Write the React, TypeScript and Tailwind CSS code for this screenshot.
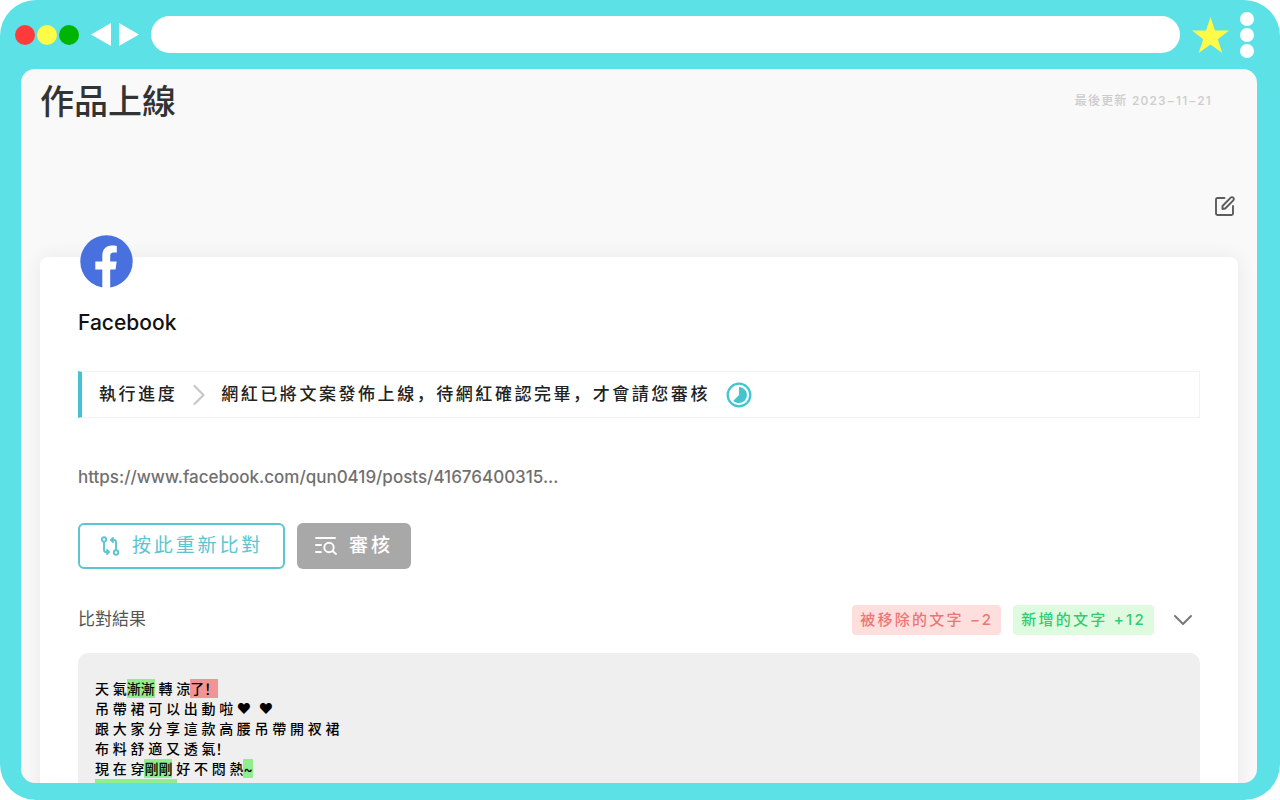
import { ChevronDown, ChevronRight } from "lucide-react";

const diffLines = [
  [
    { text: "天 氣" },
    { text: "漸漸", type: "added" },
    { text: " 轉 涼" },
    { text: "了！", type: "removed" },
  ],
  [{ text: "吊 帶 裙 可 以 出 動 啦 ♥\u00a0 ♥" }],
  [{ text: "跟 大 家 分 享 這 款 高 腰 吊 帶 開 衩 裙" }],
  [{ text: "布 料 舒 適 又 透 氣！" }],
  [
    { text: "現 在 穿" },
    { text: "剛剛", type: "added" },
    { text: " 好 不 悶 熱" },
    { text: "~", type: "added" },
  ],
];

const diffColors: Record<string, string> = {
  added: "bg-[#90ee90] py-px",
  removed: "bg-[#f29494] py-px",
};

function BrowserBar() {
  return (
    <header className="flex h-[69px] shrink-0 items-center pl-[15px] pr-[26px]">
      <div className="flex gap-0.5">
        <span className="size-5 rounded-full bg-[#ff3a3a]" />
        <span className="size-5 rounded-full bg-[#fffb47]" />
        <span className="size-5 rounded-full bg-[#00b400]" />
      </div>
      <nav className="ml-3 flex gap-2">
        <button type="button" aria-label="Back">
          <svg width="20" height="24" viewBox="0 0 20 24" fill="#fff">
            <path d="M20 0v23L0 11.5z" />
          </svg>
        </button>
        <button type="button" aria-label="Forward">
          <svg width="20" height="24" viewBox="0 0 20 24" fill="#fff">
            <path d="M0 0v23l20-11.5z" />
          </svg>
        </button>
      </nav>
      <input
        type="text"
        aria-label="Address"
        className="mx-3 h-[37px] min-w-0 flex-1 rounded-full bg-white px-5 text-sm outline-none"
      />
      <button type="button" aria-label="Bookmark">
        <svg width="38" height="36" viewBox="0 0 38 36" fill="#fffb47">
          <path d="M18.500 0l4.500 13.600H37l-11.200 8.600L30.300 36 18.500 27.500 6.700 36l4.500-13.800L0 13.600h14z" />
        </svg>
      </button>
      <button type="button" aria-label="Menu" className="ml-2.5 flex flex-col gap-0.5">
        <span className="size-3.5 rounded-full bg-white" />
        <span className="size-3.5 rounded-full bg-white" />
        <span className="size-3.5 rounded-full bg-white" />
      </button>
    </header>
  );
}

function EditIcon() {
  return (
    <svg width="22" height="22" viewBox="0 0 22 22" fill="none" stroke="#5c5c5c" strokeWidth="1.9" strokeLinecap="round" strokeLinejoin="round">
      <path d="M10.500 3H3.500a1.500 1.500 0 0 0-1.500 1.500v14a1.500 1.500 0 0 0 1.500 1.500h14a1.500 1.500 0 0 0 1.500-1.500V11" />
      <path d="M8.500 14v-3l8.200-8.300a1.800 1.800 0 0 1 2.600 0 1.800 1.800 0 0 1 0 2.600L11.200 13.500z" />
    </svg>
  );
}

function FacebookIcon() {
  return (
    <svg width="53" height="53" viewBox="0 0 53 53" className="ml-0.5">
      <circle cx="26.500" cy="26.500" r="26.200" fill="#4871df" />
      <path
        fill="#fff"
        d="M22.300 53V34.500h-7V26.500h7v-5.500c0-7 4-10.500 9.300-10.500 2 0 3.700.2 5.200.4v6.600h-2.900c-3 0-3.700 1.500-3.700 3.700v5.300h6.500l-1.200 8h-5.300V53z"
      />
    </svg>
  );
}

function ProgressIcon() {
  return (
    <svg width="26" height="26" viewBox="0 0 26 26">
      <circle cx="13" cy="13" r="11.300" fill="none" stroke="#45c4d0" strokeWidth="2.300" />
      <path d="M13 5a8 8 0 1 1-5.700 13.700L13 13z" fill="#45c4d0" />
    </svg>
  );
}

function CompareIcon() {
  return (
    <svg width="20" height="20" viewBox="0 0 20 20" fill="none" stroke="#5bc5d1" strokeWidth="1.900" strokeLinecap="round" strokeLinejoin="round">
      <circle cx="4" cy="3.500" r="2.200" />
      <circle cx="16" cy="16.500" r="2.200" />
      <path d="M4 6V14a2 2 0 0 0 2 2h3M7 14L9 16l-2 2M16 14V6a2 2 0 0 0-2-2h-3M13 2l-2 2 2 2" />
    </svg>
  );
}

function ReviewIcon() {
  return (
    <svg width="22" height="20" viewBox="0 0 22 20" fill="none" stroke="#fff" strokeWidth="1.900" strokeLinecap="round">
      <path d="M1 2h19M1 9h5M1 16h5" />
      <circle cx="14" cy="11.500" r="4.700" />
      <path d="M17.500 15l3.500 3" />
    </svg>
  );
}

export default function App() {
  return (
    <div className="h-screen bg-white font-[Inter,'Noto_Sans_CJK_SC',sans-serif]">
      <div className="flex h-full flex-col overflow-hidden rounded-[36px] bg-[#5ce1e6] pb-[17px]">
        <BrowserBar />

        <main className="ml-[21px] mr-[23px] min-h-0 flex-1 overflow-hidden rounded-[14px] bg-[#f9f9f9] px-[19px]">
          <div className="flex h-16 items-center justify-between">
            <h1 className="text-[34px] font-medium text-[#333]">作品上線</h1>
            <p className="mr-[26px] text-xs font-medium tracking-widest text-[#ccc]">最後更新 2023−11−21</p>
          </div>
          <div className="mt-[62px] flex justify-end pr-0.5">
            <button type="button" aria-label="編輯">
              <EditIcon />
            </button>
          </div>

          {/* Post card */}
          <section className="mt-10 rounded-lg bg-white px-[38px] pb-10 shadow-[0_0_20px_rgba(0,0,0,0.07)]">
            <div className="-mt-[22px] inline-block">
              <FacebookIcon />
            </div>
            <h2 className="mt-[13px] text-[21px] leading-8 font-medium text-[#111]">Facebook</h2>

            <div className="mt-8 flex h-[47px] items-center border border-l-4 border-[#f2f2f2] border-l-[#45c4d0] pl-[17px] text-[17px] font-medium tracking-[0.15em] text-[#222]">
              <span>執行進度</span>
              <ChevronRight className="mx-1 size-9 text-[#c8c8c8]" strokeWidth={1.5} />
              <span>網紅已將文案發佈上線，待網紅確認完畢，才會請您審核</span>
              <span className="ml-4">
                <ProgressIcon />
              </span>
            </div>

            <a href="https://www.facebook.com/qun0419/posts/41676400315" className="mt-[47px] block text-[17px] leading-6 font-medium text-[#707070]">
              https://www.facebook.com/qun0419/posts/41676400315...
            </a>

            <div className="mt-[34px] flex gap-3">
              <button
                type="button"
                className="flex h-[46px] items-center gap-3 rounded-md border-2 border-[#5bc5d1] px-5 text-[19px] tracking-[0.15em] text-[#5bc5d1]"
              >
                <CompareIcon />
                按此重新比對
              </button>
              <button
                type="button"
                className="flex h-[46px] items-center gap-3 rounded-md bg-[#a8a8a8] px-[18px] text-[19px] font-medium tracking-[0.15em] text-white"
              >
                <ReviewIcon />
                審核
              </button>
            </div>

            <div className="mt-[35px] flex items-center">
              <h3 className="flex-1 text-[17px] text-[#555]">比對結果</h3>
              <span className="flex h-[30px] items-center rounded bg-[#ffdede] px-2 text-[15px] font-medium tracking-[0.15em] text-[#ec7676]">
                被移除的文字 −2
              </span>
              <span className="ml-3 flex h-[30px] items-center rounded bg-[#dffbdf] px-2 text-[15px] font-medium tracking-[0.15em] text-[#2fcc71]">
                新增的文字 +12
              </span>
              <button type="button" aria-label="展開" className="ml-[13px] mr-px">
                <ChevronDown className="size-8 text-[#777]" strokeWidth={1.5} />
              </button>
            </div>

            <div className="mt-[17px] rounded-[10px] bg-[#efefef] px-[17px] py-[26px] text-sm leading-5 font-medium text-black">
              {diffLines.map((line, index) => (
                <p key={index}>
                  {line.map((part, idx) => (
                    <span key={idx} className={part.type ? diffColors[part.type] : undefined}>
                      {part.text}
                    </span>
                  ))}
                </p>
              ))}
              <div className="h-5 w-[82px] bg-[#90ee90]" />
            </div>
          </section>
        </main>
      </div>
    </div>
  );
}
